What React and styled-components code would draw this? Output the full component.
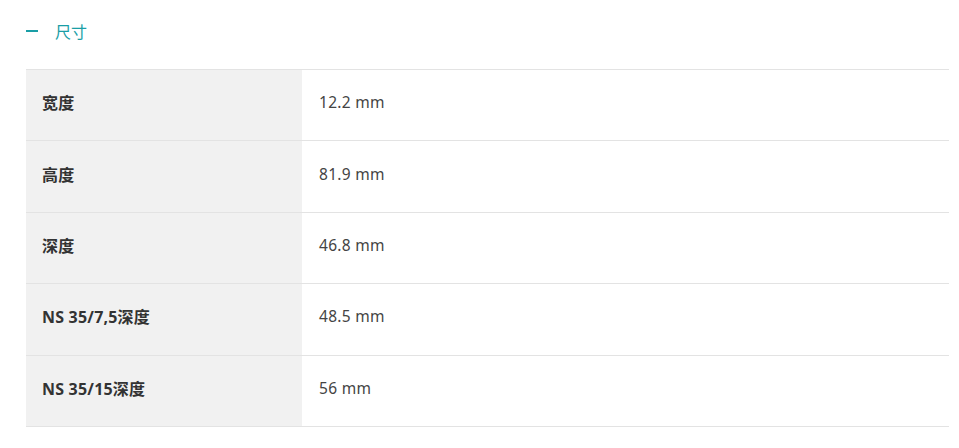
import React from 'react';
import styled, { createGlobalStyle } from 'styled-components';

const GlobalStyle = createGlobalStyle`
  body {
    margin: 0;
    background: #fff;
    font-family: 'Open Sans', 'Noto Sans CJK SC', sans-serif;
  }
`;

const rows = [
  ['宽度', '12.2 mm'],
  ['高度', '81.9 mm'],
  ['深度', '46.8 mm'],
  ['NS 35/7,5深度', '48.5 mm'],
  ['NS 35/15深度', '56 mm'],
];

export default function App() {
  return (
    <>
      <GlobalStyle />
      <Section>
        <Header>
          <Dash />
          <Title>尺寸</Title>
        </Header>
        <Table>
          {rows.map(([label, value]) => (
            <Row key={label}>
              <Label>{label}</Label>
              <Value>{value}</Value>
            </Row>
          ))}
        </Table>
      </Section>
    </>
  );
}

const Section = styled.div`
  padding: 19px 10px 0 26px;
`;

const Header = styled.div`
  display: flex;
  align-items: center;
  height: 24px;
  margin-bottom: 26px;
`;

const Dash = styled.span`
  display: block;
  width: 12px;
  height: 2px;
  background: #1a9ea6;
  margin-right: 17px;
`;

const Title = styled.span`
  font-family: 'Noto Sans CJK SC', sans-serif;
  font-size: 16px;
  color: #1a9ea6;
`;

const Table = styled.div`
  border-top: 1px solid #e3e3e3;
`;

const Row = styled.div`
  display: grid;
  grid-template-columns: 276px 1fr;
  height: 70.4px;
  border-bottom: 1px solid #e3e3e3;
`;

const Label = styled.div`
  display: flex;
  align-items: center;
  padding: 0 0 6px 16px;
  background: #f1f1f1;
  font-family: 'Noto Sans', 'Noto Sans CJK SC', sans-serif;
  font-weight: 700;
  font-size: 16px;
  letter-spacing: 0.2px;
  color: #333;
`;

const Value = styled.div`
  display: flex;
  align-items: center;
  padding: 0 0 6px 17px;
  font-family: 'Noto Sans', 'Noto Sans CJK SC', sans-serif;
  font-size: 15.5px;
  letter-spacing: 0.3px;
  color: #444;
`;
